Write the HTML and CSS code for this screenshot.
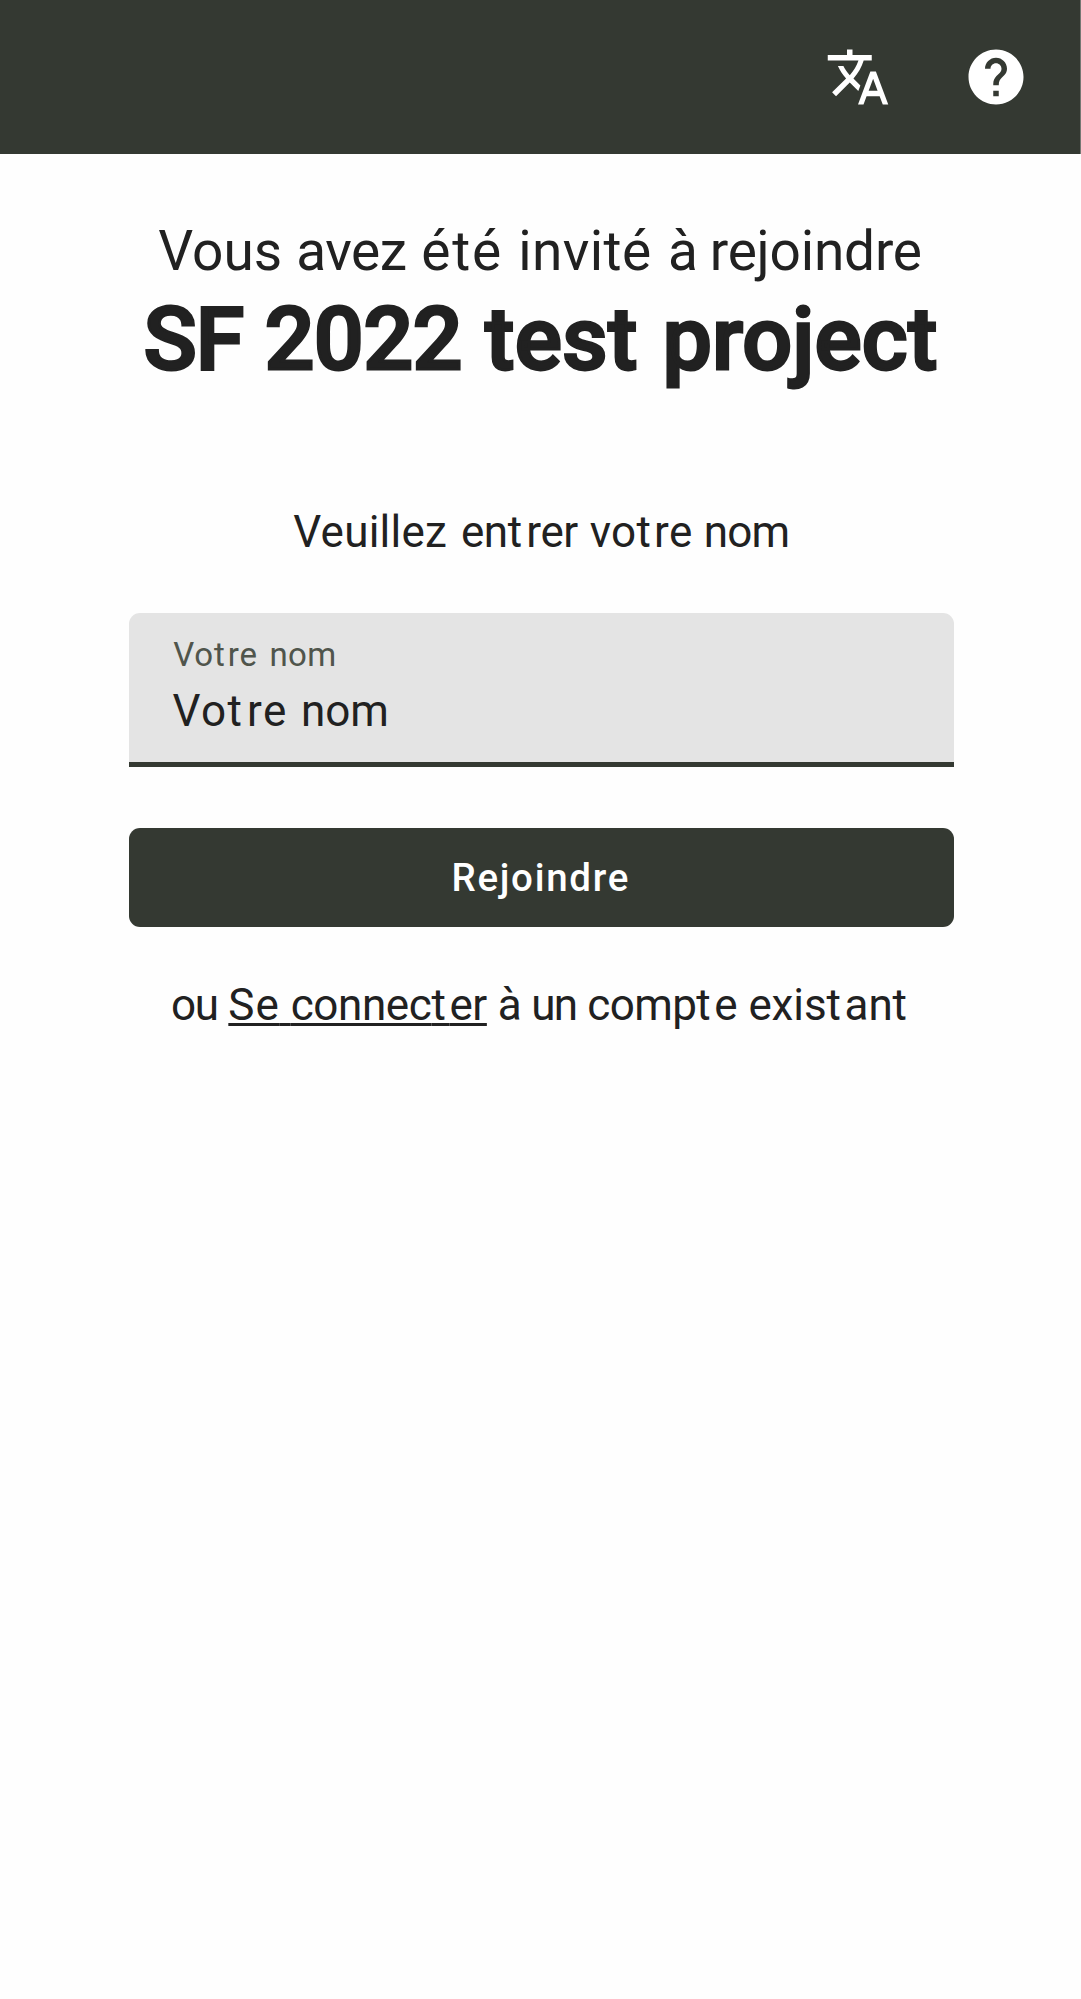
FILE: index.html
```html
<!DOCTYPE html>
<html lang="fr">
<head>
<meta charset="utf-8">
<title>SF 2022 test project</title>
<link rel="stylesheet" href="styles.css">
</head>
<body>
<header class="toolbar">
  <svg class="icon" viewBox="0 0 24 24"><path d="M12.87 15.07l-2.54-2.51.03-.03c1.74-1.94 2.98-4.17 3.71-6.53H17V4h-7V2H8v2H1v1.99h11.17C11.5 7.92 10.44 9.75 9 11.35 8.07 10.32 7.3 9.19 6.69 8h-2c.73 1.63 1.73 3.17 2.98 4.56l-5.09 5.02L4 19l5-5 3.11 3.11.76-2.04zM18.5 10h-2L12 22h2l1.12-3h4.75L21 22h2l-4.5-12zm-2.62 7l1.62-4.33L19.12 17h-3.24z"/></svg>
  <svg class="icon" viewBox="0 0 24 24"><path d="M12 2C6.48 2 2 6.48 2 12s4.48 10 10 10 10-4.48 10-10S17.52 2 12 2zm1 17h-2v-2h2v2zm2.07-7.75l-.9.92C13.45 12.9 13 13.5 13 15h-2v-.5c0-1.1.45-2.1 1.17-2.83l1.24-1.26c.37-.36.59-.86.59-1.41 0-1.1-.9-2-2-2s-2 .9-2 2H8c0-2.21 1.79-4 4-4s4 1.79 4 4c0 .88-.36 1.68-.93 2.25z"/></svg>
</header>
<main class="content">
  <p class="invite">Vous <span class="w-avez">avez</span> <span class="w-ete">été</span> <span class="w-invite">invité</span> <span class="w-a">à</span> <span class="w-rejoindre">rejoindre</span></p>
  <h1 class="project"><span class="w-sf">SF</span> <span class="w-year">2022</span> <span class="w-test">test</span> <span class="w-project">project</span></h1>
  <p class="prompt"><span class="w-veuillez">Veuillez</span> <span class="w-entrer">en<span class="t">t</span>rer</span> <span class="w-votre">vo<span class="t">t</span>re</span> <span class="w-nom">nom</span></p>
  <label class="field">
    <span class="label"><span class="w-label">Vo<span class="t">t</span>re</span> <span class="w-label-nom">nom</span></span>
    <span class="value"><span class="w-value">Vo<span class="t">t</span>re</span> <span class="w-value-nom">nom</span></span>
  </label>
  <button class="join">Rejoindre</button>
  <p class="signin"><span class="w-ou">ou</span> <a class="link"><span class="w-se">Se</span> <span class="w-connecter">connec<span class="t">t</span>er</span></a> à <span class="w-un">un</span> <span class="w-compte">comp<span class="t">t</span>e</span> <span class="w-existant">exis<span class="t">t</span>ant</span></p>
</main>
</body>
</html>
```
FILE: styles.css
```css
* { box-sizing: border-box; }
body { margin: 0; background: #fefefe; color: #212121; font-family: Roboto, sans-serif; }
p, h1 { margin: 0; white-space: nowrap; }

.toolbar { width: 1080px; height: 154px; background: #343932; box-shadow: 1px 0 #757873; display: flex; align-items: center; justify-content: flex-end; gap: 72px; padding-right: 51px; }
.icon { width: 66px; height: 66px; fill: #fff; }

.content { width: 825px; margin-left: 129.25px; padding-top: 60px; display: flex; flex-direction: column; }
.invite { padding-left: 29px; font-size: 55px; line-height: 74px; }
.project { padding-left: 14.2px; font-size: 88px; line-height: 102px; margin-bottom: 2px; font-weight: 500; -webkit-text-stroke: 2.8px #212121; }
.prompt { margin-top: 110px; padding-left: 164px; font-size: 44px; line-height: 60px; }

.field { margin-top: 51.25px; height: 154px; background: #e4e4e4; border-bottom: 5px solid #343932; border-radius: 11px 11px 0 0; padding: 22px 44px 0; display: flex; flex-direction: column; white-space: nowrap; }
.label { font-size: 33px; line-height: 40px; color: #50554c; }
.value { margin-top: 6px; margin-left: -.8px; font-size: 44px; line-height: 60px; }

.join { margin-top: 60.25px; height: 99px; padding: 0 2px 0 0; border: 0; border-radius: 11px; background: #343932; color: #fff; font: 500 38.5px Roboto, sans-serif; letter-spacing: 1.7px; }
.signin { margin-top: 48px; padding-left: 41.8px; font-size: 44px; line-height: 60px; }
.link { text-decoration: underline; text-decoration-thickness: 3px; text-underline-offset: 3px; text-decoration-skip-ink: none; }

.w-avez { letter-spacing: -.5px; margin-left: .5px; }
.w-ete { letter-spacing: 1.8px; margin-left: 1.2px; }
.w-invite { letter-spacing: .4px; margin-left: 1.4px; }
.w-a { margin-left: 2.8px; }
.w-rejoindre { letter-spacing: -.2px; margin-left: -1.8px; }
.w-sf { letter-spacing: -1.08px; }
.w-year { letter-spacing: -.62px; margin-left: -.5px; }
.w-test { letter-spacing: .4px; margin-left: 1.2px; }
.w-project { letter-spacing: .16px; margin-left: 2.8px; }
.w-veuillez { letter-spacing: .25px; }
.w-entrer { letter-spacing: -.35px; margin-left: 2.8px; }
.w-entrer .t { letter-spacing: 4px; }
.w-votre { letter-spacing: .35px; margin-left: .8px; }
.w-votre .t { letter-spacing: 3.2px; }
.w-nom { letter-spacing: -.8px; margin-left: .2px; }
.w-label { letter-spacing: .8px; }
.w-label .t { letter-spacing: 3px; }
.w-label-nom { letter-spacing: .3px; margin-left: 3.6px; }
.w-value { letter-spacing: 1.5px; }
.w-value .t { letter-spacing: 5px; }
.w-value-nom { letter-spacing: 0; margin-left: 2.2px; }
.w-ou { letter-spacing: -1.5px; }
.w-se { letter-spacing: 1px; }
.w-connecter { letter-spacing: -.4px; }
.w-connecter .t { letter-spacing: 3.6px; }
.w-un { letter-spacing: -1.7px; margin-left: -1.4px; }
.w-compte { letter-spacing: -.6px; margin-left: 0; }
.w-compte .t { letter-spacing: 3.6px; }
.w-existant { letter-spacing: -.1px; margin-left: .4px; }
.w-existant .t { letter-spacing: 3.6px; }
```
